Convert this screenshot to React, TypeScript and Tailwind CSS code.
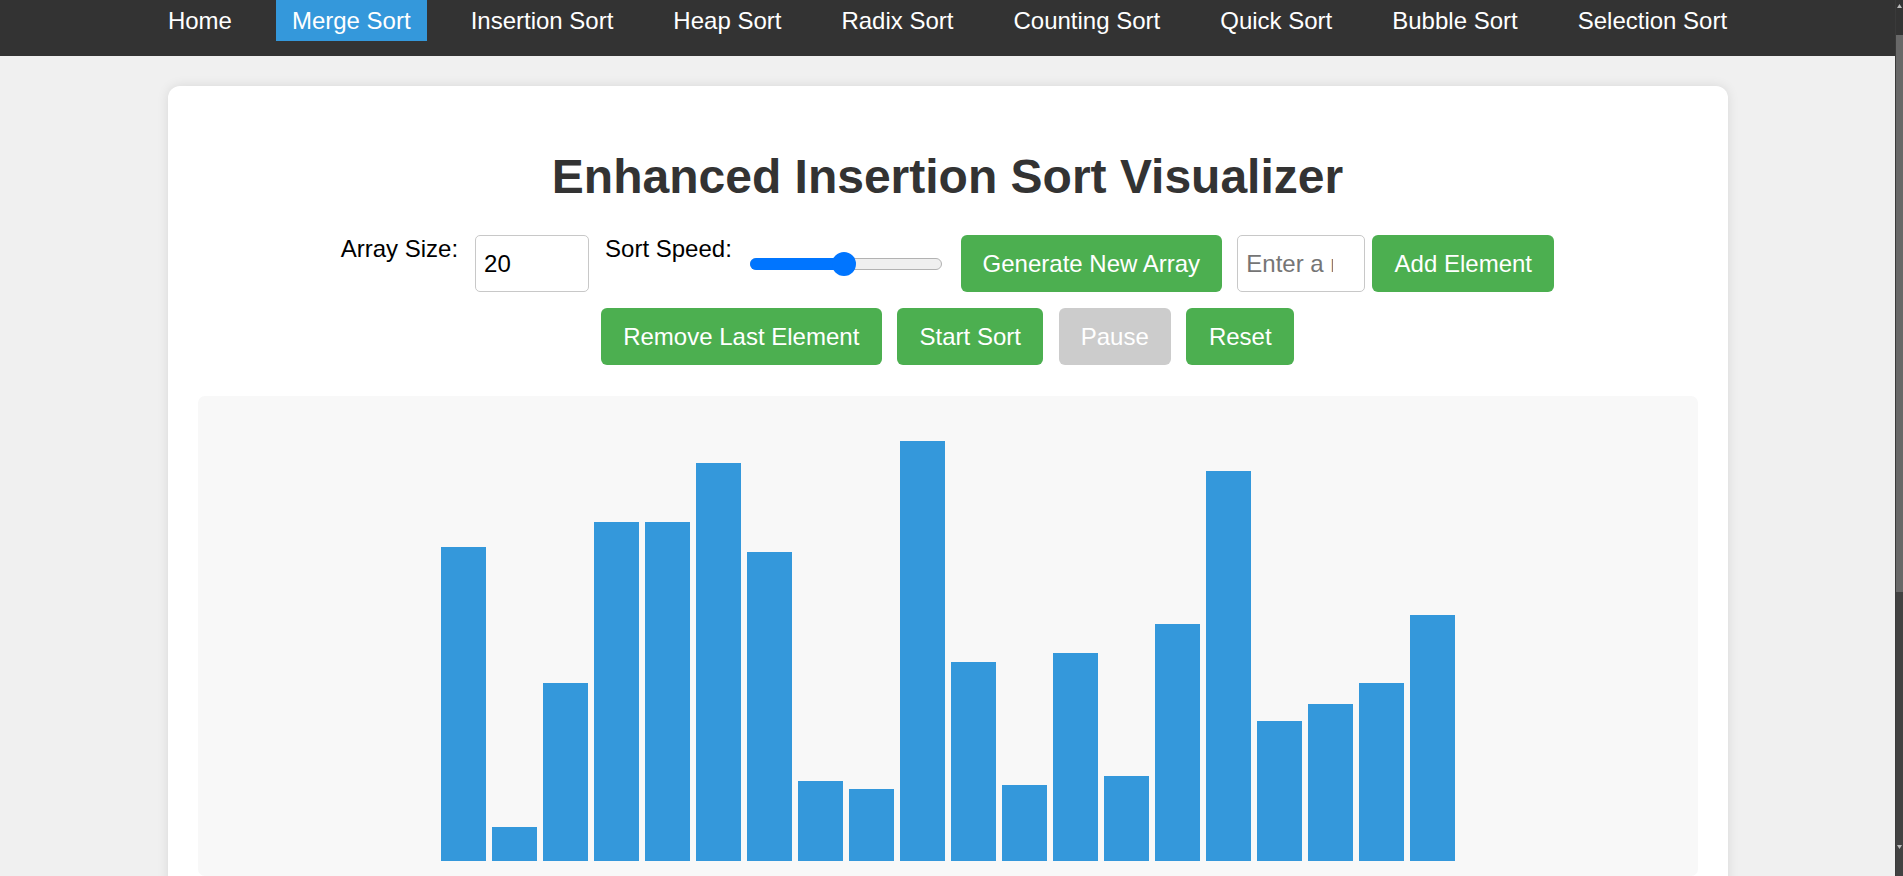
import React, { useState } from 'react';

const navItems = [
  'Home',
  'Merge Sort',
  'Insertion Sort',
  'Heap Sort',
  'Radix Sort',
  'Counting Sort',
  'Quick Sort',
  'Bubble Sort',
  'Selection Sort',
];

const bars = [314, 34, 178, 339, 339, 398, 309, 80, 72, 420, 199, 76, 208, 85, 237, 390, 140, 157, 178, 246];

const App: React.FC = () => {
  const [size, setSize] = useState('20');
  const [newValue, setNewValue] = useState('');
  const active = 'Merge Sort';

  return (
    <div className="flex h-[876px] overflow-hidden bg-[#f0f0f0] font-['Liberation_Sans',Arial,sans-serif]">
      <div className="flex-1 min-w-0">
        {/* Top nav */}
        <nav className="h-14 bg-[#333] flex justify-center items-start gap-[28px]">
          {navItems.map(item => (
            <a
              key={item}
              href="#"
              className={`h-[41px] px-4 flex items-center text-[24px] leading-[28px] text-white ${
                item === active ? 'bg-[#3498db]' : ''
              }`}
            >
              {item}
            </a>
          ))}
        </nav>

        {/* Main card */}
        <div className="w-[1560px] mx-auto mt-[30px] bg-white rounded-xl shadow-[0_0_12px_rgba(0,0,0,0.1)] px-[30px] pt-[30px] pb-[30px]">
          <h1 className="mt-[33px] mb-[31px] text-center text-[48px] leading-[55px] font-bold text-[#333]">
            Enhanced Insertion Sort Visualizer
          </h1>

          {/* Controls row 1 */}
          <div className="flex justify-center items-start">
            <label className="text-[24px] leading-[28px] text-black">Array Size:</label>
            <input
              type="number"
              value={size}
              onChange={e => setSize(e.target.value)}
              className="ml-[17px] w-[114px] h-[57px] border border-[#c8c8c8] rounded-[5px] px-2 text-[24px] text-black bg-white outline-none"
            />
            <label className="ml-[16px] text-[24px] leading-[28px] text-black">Sort Speed:</label>
            <div className="ml-[18px] w-[192px] h-[57px] flex items-center">
              <div className="relative w-[192px] h-3">
                <div className="absolute inset-0 rounded-full bg-[#efefef] border border-[#b2b2b2]"></div>
                <div className="absolute left-0 top-0 h-full w-[96px] rounded-full bg-[#0075ff]"></div>
                <div className="absolute left-[82px] top-[-6px] w-6 h-6 rounded-full bg-[#0075ff]"></div>
              </div>
            </div>
            <button className="ml-[19px] w-[261px] h-[57px] rounded-md bg-[#4caf50] text-white text-[24px]">
              Generate New Array
            </button>
            <input
              type="number"
              placeholder="Enter a number"
              value={newValue}
              onChange={e => setNewValue(e.target.value)}
              className="ml-[15.5px] w-[128px] h-[57px] border border-[#c8c8c8] rounded-[5px] pl-2 pr-[16px] text-[24px] text-black bg-white outline-none placeholder:text-[#757575]"
            />
            <button className="ml-[7px] w-[182px] h-[57px] rounded-md bg-[#4caf50] text-white text-[24px]">
              Add Element
            </button>
          </div>

          {/* Controls row 2 */}
          <div className="mt-4 flex justify-center gap-[15.5px]">
            <button className="w-[281px] h-[57px] rounded-md bg-[#4caf50] text-white text-[24px]">
              Remove Last Element
            </button>
            <button className="w-[146px] h-[57px] rounded-md bg-[#4caf50] text-white text-[24px]">
              Start Sort
            </button>
            <button disabled className="w-[112px] h-[57px] rounded-md bg-[#cccccc] text-white text-[24px]">
              Pause
            </button>
            <button className="w-[108px] h-[57px] rounded-md bg-[#4caf50] text-white text-[24px]">
              Reset
            </button>
          </div>

          {/* Bars */}
          <div className="mt-[31px] h-[480px] bg-[#f8f8f8] rounded-[7px] flex justify-center items-end gap-[6px] pb-[15px]">
            {bars.map((h, i) => (
              <div key={i} className="w-[45px] bg-[#3498db]" style={{ height: `${h}px` }}></div>
            ))}
          </div>
        </div>
      </div>

      {/* Scrollbar */}
      <div className="w-2 h-full flex flex-col bg-[#424242] border-l border-[#3a3a3a]">
        <div className="h-[35px] bg-[#333] flex justify-center pt-[4px]">
          <svg width="5" height="4" viewBox="0 0 5 4">
            <path d="M2.5 0 L5 4 L0 4 Z" fill="#bbb" />
          </svg>
        </div>
        <div className="h-[557px] bg-[#686868]"></div>
        <div className="flex-1"></div>
        <div className="h-[35px] flex justify-center items-start pt-[4px]">
          <svg width="5" height="4" viewBox="0 0 5 4">
            <path d="M0 0 L5 0 L2.5 4 Z" fill="#bbb" />
          </svg>
        </div>
      </div>
    </div>
  );
};

export default App;
